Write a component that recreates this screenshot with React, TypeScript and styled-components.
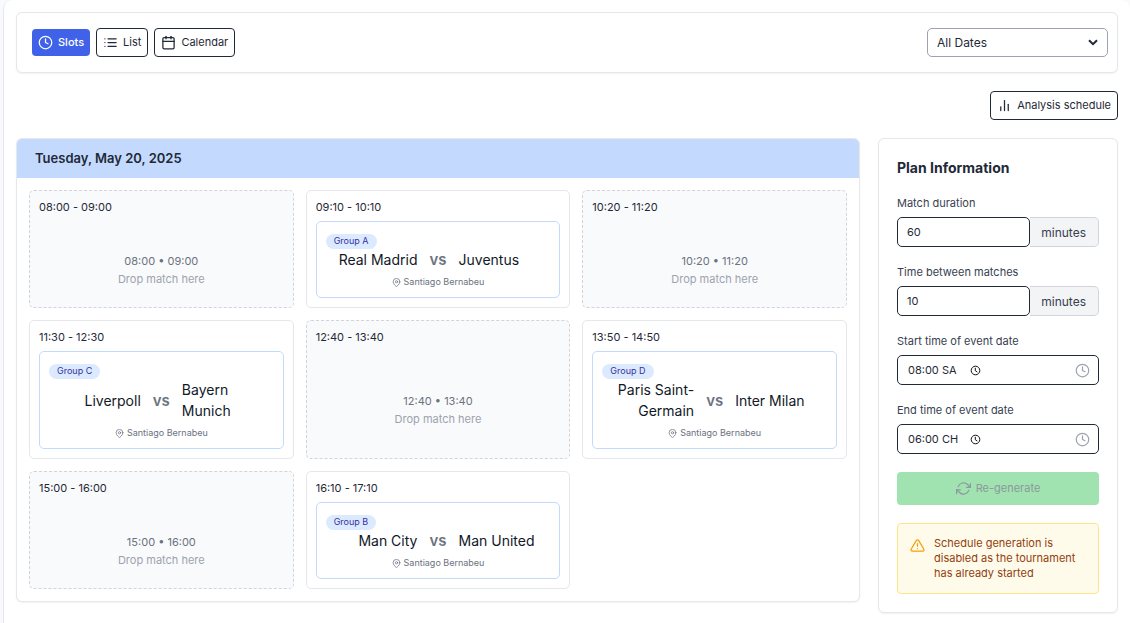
import React from "react";
import styled, { createGlobalStyle, css } from "styled-components";
import {
  FiAlertTriangle,
  FiBarChart2,
  FiCalendar,
  FiClock,
  FiList,
  FiMapPin,
  FiRefreshCw,
} from "react-icons/fi";

const GlobalStyle = createGlobalStyle`
  *, *::before, *::after { box-sizing: border-box; }
  body {
    margin: 0;
    background: #f9fafb;
    color: #1f2937;
    font-family: Inter, "Liberation Sans", sans-serif;
    font-size: 11px;
    line-height: 15px;
  }
  button, input, select { font: inherit; color: inherit; margin: 0; }
  h2, h3, p { margin: 0; }
  svg { display: block; flex: none; }
`;

const Page = styled.main`
  min-height: 100vh;
  margin: 0 0 0 3px;
  padding: 12px;
  background: #fff;
  border-left: 1px solid #e5e7eb;
  border-radius: 9px 9px 0 0;
`;

const panel = css`
  background: #fff;
  border: 1px solid #e5e7eb;
  border-radius: 6px;
  box-shadow: 0 1px 2px rgba(0, 0, 0, 0.06);
`;

const Toolbar = styled.header`
  ${panel}
  display: flex;
  align-items: center;
  justify-content: space-between;
  padding: 15px 9px 15px 15px;
`;

const ViewSwitch = styled.div`
  display: flex;
  align-items: center;
  gap: 6px;
`;

const Button = styled.button<{ $active?: boolean }>`
  display: inline-flex;
  align-items: center;
  gap: 5px;
  padding: 6px;
  border: ${(p) => (p.$active ? "0" : "1px solid #1f2937")};
  border-radius: 4px;
  background: ${(p) => (p.$active ? "#4062e8" : "#fff")};
  color: ${(p) => (p.$active ? "#fff" : "#1f2937")};
  font-weight: ${(p) => (p.$active ? 500 : 400)};
  cursor: pointer;
`;

const SelectBox = styled.div`
  display: grid;
  align-items: center;
  width: 181px;
  > * { grid-area: 1 / 1; }
  > svg { justify-self: end; margin-right: 10px; pointer-events: none; }
`;

const Select = styled.select`
  appearance: none;
  width: 100%;
  height: 29px;
  padding: 0 9px;
  border: 1px solid #9ca3af;
  border-radius: 5px;
  background: #fff;
  font-size: 12px;
`;

const Actions = styled.div`
  display: flex;
  justify-content: flex-end;
  margin: 18px 0;
`;

const Columns = styled.div`
  display: grid;
  grid-template-columns: minmax(0, 1fr) 240px;
  gap: 18px;
  align-items: start;
`;

const Board = styled.section`
  ${panel}
  overflow: hidden;
`;

const BoardTitle = styled.h2`
  padding: 9px 18px;
  background: #c3dafe;
  font-size: 13px;
  line-height: 21px;
  font-weight: 600;
`;

const SlotGrid = styled.div`
  display: grid;
  grid-template-columns: repeat(3, minmax(0, 1fr));
  gap: 12px;
  padding: 12px;
`;

const SlotCard = styled.article<{ $empty: boolean }>`
  display: flex;
  flex-direction: column;
  gap: 6px;
  min-height: 118px;
  padding: 9px;
  border: 1px ${(p) => (p.$empty ? "dashed #d1d5db" : "solid #e5e7eb")};
  border-radius: 5px;
  background: ${(p) => (p.$empty ? "#f9fafb" : "#fff")};
`;

const SlotTime = styled.h3`
  color: #1f2937;
  font-size: 11px;
  line-height: 15px;
  font-weight: 400;
`;

const DropZone = styled.div`
  flex: 1;
  display: flex;
  flex-direction: column;
  align-items: center;
  justify-content: center;
  gap: 3px;
  padding-top: 21px;
  color: #6b7280;
`;

const DropHint = styled.p`
  color: #9ca3af;
`;

const MatchCard = styled.div`
  padding: 9px;
  border: 1px solid #c3dafe;
  border-radius: 5px;
  background: #fff;
`;

const BadgeLine = styled.div`
  display: flex;
  padding-top: 3px;
`;

const Badge = styled.span`
  padding: 0 8px 1px;
  border-radius: 8px;
  background: #dbeafe;
  color: #3730a3;
  font-size: 9px;
  line-height: 14px;
  font-weight: 400;
`;

const Teams = styled.div`
  display: grid;
  grid-template-columns: 1fr auto 1fr;
  align-items: center;
  gap: 12px;
  margin-bottom: 6px;
  color: #111827;
  font-size: 14px;
  line-height: 21px;
  font-weight: 400;
`;

const Home = styled.span`
  text-align: right;
`;

const Versus = styled.span`
  color: #6b7280;
  font-size: 15px;
  font-weight: 600;
`;

const Venue = styled.p`
  display: flex;
  align-items: center;
  justify-content: center;
  gap: 3px;
  color: #6b7280;
  font-size: 9px;
  line-height: 12px;
`;

const Sidebar = styled.aside`
  ${panel}
  display: flex;
  flex-direction: column;
  gap: 18px;
  padding: 18px;
`;

const SidebarTitle = styled.h2`
  font-size: 14px;
  line-height: 21px;
  font-weight: 700;
`;

const Field = styled.div`
  display: flex;
  flex-direction: column;
  gap: 6px;
`;

const Label = styled.label`
  color: #374151;
`;

const InputGroup = styled.div`
  display: flex;
  height: 30px;
`;

const NumberInput = styled.input`
  flex: 1;
  min-width: 0;
  padding: 0 9px;
  border: 1px solid #1f2937;
  border-radius: 5px;
  background: #fff;
`;

const Unit = styled.span`
  display: flex;
  align-items: center;
  padding: 0 12px 0 11px;
  border: 1px solid #d1d5db;
  border-left: 0;
  border-radius: 0 5px 5px 0;
  background: #f3f4f6;
  color: #374151;
  font-size: 12px;
`;

const TimeBox = styled.div`
  display: flex;
  align-items: center;
  height: 30px;
  padding: 0 8px 0 10px;
  border: 1px solid #1f2937;
  border-radius: 5px;
  > svg:last-child { margin-left: auto; color: #9ca3af; }
`;

const TimeInput = styled.input`
  width: 62px;
  padding: 0;
  border: 0;
  outline: 0;
  background: transparent;
`;

const Regenerate = styled.button`
  display: flex;
  align-items: center;
  justify-content: center;
  gap: 5px;
  padding: 9px;
  border: 0;
  border-radius: 4px;
  background: #a1e2b1;
  color: #8b9a9b;
`;

const Notice = styled.div`
  display: flex;
  gap: 9px;
  padding: 12px;
  border: 1px solid #fde68a;
  border-radius: 4px;
  background: #fffbeb;
  color: #92400e;
  > svg { margin-top: 2px; color: #f59e0b; }
`;

type Slot = {
  start: string;
  end: string;
  match?: { group: string; home: string; away: string };
};

const slots: Slot[] = [
  { start: "08:00", end: "09:00" },
  { start: "09:10", end: "10:10", match: { group: "Group A", home: "Real Madrid", away: "Juventus" } },
  { start: "10:20", end: "11:20" },
  { start: "11:30", end: "12:30", match: { group: "Group C", home: "Liverpoll", away: "Bayern Munich" } },
  { start: "12:40", end: "13:40" },
  { start: "13:50", end: "14:50", match: { group: "Group D", home: "Paris Saint-Germain", away: "Inter Milan" } },
  { start: "15:00", end: "16:00" },
  { start: "16:10", end: "17:10", match: { group: "Group B", home: "Man City", away: "Man United" } },
];

function SlotItem({ start, end, match }: Slot) {
  return (
    <SlotCard $empty={!match}>
      <SlotTime>{`${start} - ${end}`}</SlotTime>
      {match ? (
        <MatchCard>
          <BadgeLine>
            <Badge>{match.group}</Badge>
          </BadgeLine>
          <Teams>
            <Home>{match.home}</Home>
            <Versus>vs</Versus>
            <span>{match.away}</span>
          </Teams>
          <Venue>
            <FiMapPin size={9} />
            Santiago Bernabeu
          </Venue>
        </MatchCard>
      ) : (
        <DropZone>
          <p>{`${start} • ${end}`}</p>
          <DropHint>Drop match here</DropHint>
        </DropZone>
      )}
    </SlotCard>
  );
}

function MinutesField({ id, label, value }: { id: string; label: string; value: string }) {
  return (
    <Field>
      <Label htmlFor={id}>{label}</Label>
      <InputGroup>
        <NumberInput id={id} inputMode="numeric" defaultValue={value} />
        <Unit>minutes</Unit>
      </InputGroup>
    </Field>
  );
}

function PickerClock() {
  return (
    <svg width="11" height="11" viewBox="0 0 11 11" fill="none" stroke="#111" strokeWidth="1">
      <circle cx="5.5" cy="5.5" r="4.3" />
      <path d="M5.3 2.8v2.9l2 1.4" />
    </svg>
  );
}

function TimeField({ id, label, value }: { id: string; label: string; value: string }) {
  return (
    <Field>
      <Label htmlFor={id}>{label}</Label>
      <TimeBox>
        <TimeInput id={id} defaultValue={value} />
        <PickerClock />
        <FiClock size={15} />
      </TimeBox>
    </Field>
  );
}

export default function App() {
  return (
    <>
      <GlobalStyle />
      <Page>
        <Toolbar>
          <ViewSwitch>
            <Button $active>
              <FiClock size={15} />
              Slots
            </Button>
            <Button>
              <FiList size={15} />
              List
            </Button>
            <Button>
              <FiCalendar size={15} />
              Calendar
            </Button>
          </ViewSwitch>
          <SelectBox>
            <Select aria-label="Date">
              <option>All Dates</option>
            </Select>
            <svg width="10" height="7" viewBox="0 0 10 7" fill="none" stroke="#1f2937" strokeWidth="2">
              <path d="M1 1.2l4 4 4-4" />
            </svg>
          </SelectBox>
        </Toolbar>
        <Actions>
          <Button>
            <FiBarChart2 size={15} />
            Analysis schedule
          </Button>
        </Actions>
        <Columns>
          <Board>
            <BoardTitle>Tuesday, May 20, 2025</BoardTitle>
            <SlotGrid>
              {slots.map((slot) => (
                <SlotItem key={slot.start} {...slot} />
              ))}
            </SlotGrid>
          </Board>
          <Sidebar>
            <SidebarTitle>Plan Information</SidebarTitle>
            <MinutesField id="duration" label="Match duration" value="60" />
            <MinutesField id="between" label="Time between matches" value="10" />
            <TimeField id="start" label="Start time of event date" value="08:00 SA" />
            <TimeField id="end" label="End time of event date" value="06:00 CH" />
            <Regenerate disabled>
              <FiRefreshCw size={15} />
              Re-generate
            </Regenerate>
            <Notice role="status">
              <FiAlertTriangle size={15} />
              <p>Schedule generation is disabled as the tournament has already started</p>
            </Notice>
          </Sidebar>
        </Columns>
      </Page>
    </>
  );
}
